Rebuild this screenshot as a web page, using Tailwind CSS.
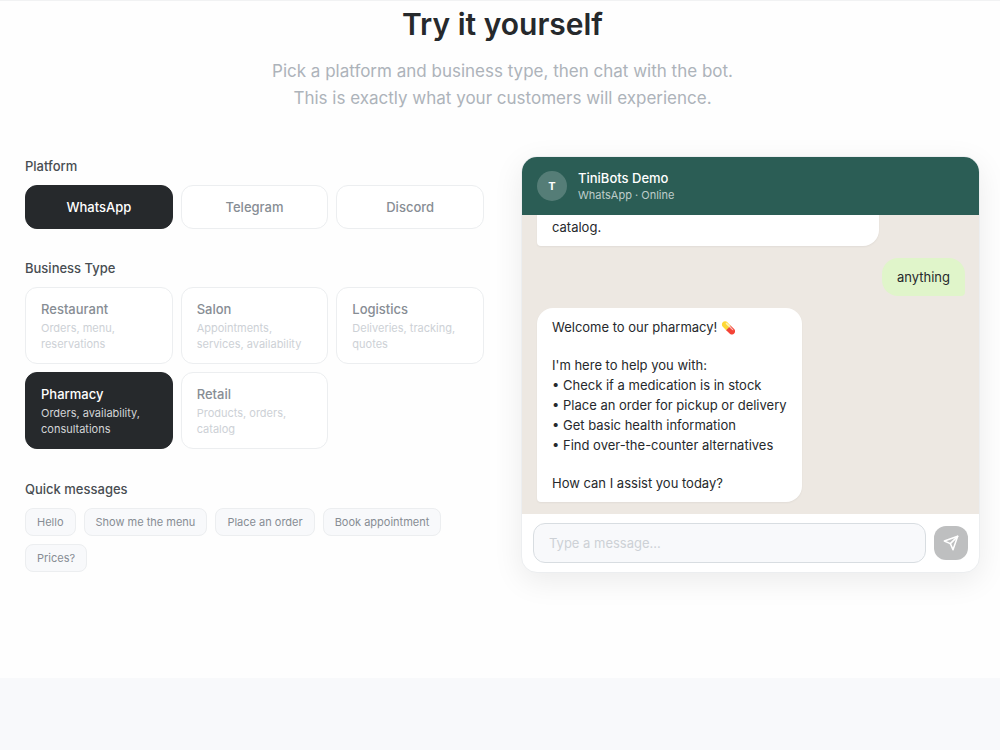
<!DOCTYPE html>
<html lang="en">
<head>
<meta charset="utf-8">
<meta name="viewport" content="width=device-width, initial-scale=1">
<title>TiniBots Demo</title>
<script src="https://cdn.jsdelivr.net/npm/@tailwindcss/browser@4"></script>
</head>
<body class="min-h-screen flex flex-col bg-[#fefefe] font-['Inter',sans-serif] text-[#26292c]">
<main class="border-t border-[#f1f2f3] pl-[25px] pr-5 pt-1 pb-[105px]">
  <header class="text-center">
    <h2 class="text-[30px] leading-[38px] font-semibold">Try it yourself</h2>
    <p class="mt-[15px] text-[17px] leading-[27px] text-[#adb3ba]">Pick a platform and business type, then chat with the bot.<br>This is exactly what your customers will experience.</p>
  </header>

  <div class="mt-11 grid grid-cols-2 gap-[37px] items-start">
    <div>
      <h3 class="text-[13px] leading-5 font-medium text-[#484d52]">Platform</h3>
      <div class="mt-[9px] grid grid-cols-3 gap-2 text-[13px] leading-5 font-medium">
        <button class="h-11 rounded-xl border border-[#26292c] bg-[#26292c] text-white">WhatsApp</button>
        <button class="h-11 rounded-xl border border-[#eceef0] bg-white text-[#878d94]">Telegram</button>
        <button class="h-11 rounded-xl border border-[#eceef0] bg-white text-[#878d94]">Discord</button>
      </div>

      <h3 class="mt-[29px] text-[13px] leading-5 font-medium text-[#484d52]">Business Type</h3>
      <div class="mt-[9px] grid grid-cols-3 gap-2 text-left">
        <button class="h-[77px] rounded-xl border border-[#eceef0] bg-white px-[15px] text-left">
          <span class="block text-[13px] leading-5 font-medium text-[#878d94]">Restaurant</span>
          <span class="block mt-px text-[11px] leading-4 text-[#cdd1d6]">Orders, menu, reservations</span>
        </button>
        <button class="h-[77px] rounded-xl border border-[#eceef0] bg-white px-[15px] text-left">
          <span class="block text-[13px] leading-5 font-medium text-[#878d94]">Salon</span>
          <span class="block mt-px text-[11px] leading-4 text-[#cdd1d6]">Appointments, services, availability</span>
        </button>
        <button class="h-[77px] rounded-xl border border-[#eceef0] bg-white px-[15px] text-left">
          <span class="block text-[13px] leading-5 font-medium text-[#878d94]">Logistics</span>
          <span class="block mt-px text-[11px] leading-4 text-[#cdd1d6]">Deliveries, tracking, quotes</span>
        </button>
        <button class="h-[77px] rounded-xl border border-[#26292c] bg-[#26292c] px-[15px] text-left">
          <span class="block text-[13px] leading-5 font-medium text-white">Pharmacy</span>
          <span class="block mt-px text-[11px] leading-4 text-[#d3d5d7]">Orders, availability, consultations</span>
        </button>
        <button class="h-[77px] rounded-xl border border-[#eceef0] bg-white px-[15px] text-left">
          <span class="block text-[13px] leading-5 font-medium text-[#878d94]">Retail</span>
          <span class="block mt-px text-[11px] leading-4 text-[#cdd1d6]">Products, orders, catalog</span>
        </button>
      </div>

      <h3 class="mt-[30px] text-[13px] leading-5 font-medium text-[#484d52]">Quick messages</h3>
      <div class="mt-[9px] flex flex-wrap gap-2 text-[11px] leading-4 text-[#878d94]">
        <button class="h-7 rounded-lg border border-[#eceef0] bg-[#f8f9fb] px-[11px]">Hello</button>
        <button class="h-7 rounded-lg border border-[#eceef0] bg-[#f8f9fb] px-[11px]">Show me the menu</button>
        <button class="h-7 rounded-lg border border-[#eceef0] bg-[#f8f9fb] px-[11px]">Place an order</button>
        <button class="h-7 rounded-lg border border-[#eceef0] bg-[#f8f9fb] px-[11px]">Book appointment</button>
        <button class="h-7 rounded-lg border border-[#eceef0] bg-[#f8f9fb] px-[11px]">Prices?</button>
      </div>
    </div>

    <section class="overflow-hidden rounded-2xl border border-[#eceef0] bg-white shadow-[0_8px_30px_rgba(0,0,0,0.08)]">
      <div class="flex h-[58px] items-center gap-[11px] bg-[#2b5d55] px-[15px]">
        <div class="flex size-[30px] items-center justify-center rounded-full bg-white/20 text-[11px] font-bold text-white">T</div>
        <div>
          <p class="text-[13px] leading-[18px] font-medium text-white">TiniBots Demo</p>
          <p class="text-[11px] leading-4 text-white/70">WhatsApp · Online</p>
        </div>
      </div>
      <div class="flex h-[299px] flex-col justify-end gap-3 overflow-hidden bg-[#ede8e2] pl-[15px] pr-[14px] pb-3 text-[13px] leading-5">
        <div class="w-4/5 shrink-0 rounded-b-2xl rounded-bl-sm bg-white px-[15px] py-[9px] shadow-xs">catalog.</div>
        <div class="shrink-0 self-end rounded-2xl rounded-br-sm bg-[#e0f5ca] px-[15px] py-[9px]">anything</div>
        <div class="shrink-0 self-start rounded-2xl rounded-bl-sm bg-white px-[15px] py-[9px] shadow-xs">
          <p>Welcome to our pharmacy! <span class="text-[12px] leading-none">💊</span></p>
          <p class="mt-[18px]">I'm here to help you with:</p>
          <ul>
            <li>• Check if a medication is in stock</li>
            <li>• Place an order for pickup or delivery</li>
            <li>• Get basic health information</li>
            <li>• Find over-the-counter alternatives</li>
          </ul>
          <p class="mt-[18px]">How can I assist you today?</p>
        </div>
      </div>
      <form class="flex items-center gap-2 px-[11px] py-[9px]">
        <input type="text" aria-label="Message" placeholder="Type a message..." class="h-10 min-w-0 flex-1 rounded-xl border border-[#d8dde1] bg-[#f8f9fb] px-[15px] text-[13px] placeholder:text-[#cdd1d6]">
        <button type="button" aria-label="Send" class="flex size-[34px] shrink-0 items-center justify-center rounded-xl bg-[#bebfc0] text-white">
          <svg class="size-4" viewBox="0 0 24 24" fill="none" stroke="currentColor" stroke-width="2.3" stroke-linecap="round" stroke-linejoin="round"><path d="M22 2 11 13"/><path d="M22 2l-7 20-4-9-9-4 20-7z"/></svg>
        </button>
      </form>
    </section>
  </div>
</main>
<footer class="flex-1 bg-[#f8f9fb]"></footer>
</body>
</html>
